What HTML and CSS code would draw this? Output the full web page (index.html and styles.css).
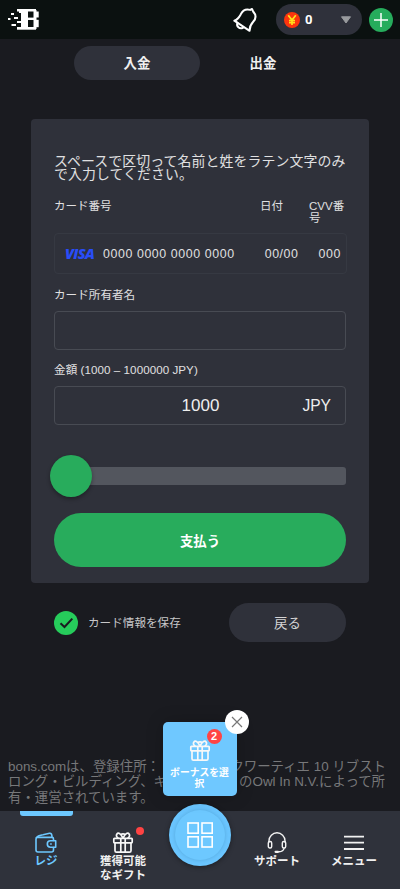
FILE: index.html
```html
<!DOCTYPE html>
<html lang="ja">
<head>
<meta charset="utf-8">
<meta name="viewport" content="width=device-width, initial-scale=1">
<title>入金</title>
<link rel="stylesheet" href="styles.css">
</head>
<body>
<div class="page">
  <header class="header">
    <svg class="logo" width="32" height="22" viewBox="0 0 32 22" fill="#fff" aria-label="Bons">
      <rect x="9" y="0" width="19" height="2.5"/>
      <rect x="13" y="0" width="7" height="20"/>
      <rect x="11" y="2" width="3" height="2"/>
      <rect x="9" y="18" width="19" height="2.7"/>
      <rect x="19" y="8.6" width="8" height="2.4"/>
      <rect x="25.5" y="1" width="3" height="19"/>
      <rect x="28" y="2.5" width="2.7" height="6"/>
      <rect x="28" y="10.8" width="2.7" height="7.4"/>
      <rect x="3" y="4" width="3" height="2"/>
      <rect x="6" y="8" width="4" height="2"/>
      <rect x="0" y="9" width="2.5" height="2"/>
      <rect x="9" y="12" width="4" height="2"/>
      <rect x="3.5" y="15" width="4.5" height="2"/>
    </svg>
    <svg class="bell" width="26" height="26" viewBox="0 0 26 26" fill="none" stroke="#fff" stroke-width="2" stroke-linecap="round" stroke-linejoin="round">
      <path d="M2.3 13.7C5.5 12.7 7 10.5 8.7 7.4C10.7 3.4 14.5 1.8 18.2 2.9L20 2L21.3 4.8C25 8.8 23.6 12.2 21 15C18.6 17.6 17.5 19.6 17.6 23.8Z"/>
      <path d="M5.4 15.7C4.2 19.5 7.3 22.7 11.3 20.6"/>
    </svg>
    <div class="balance">
      <span class="coin"><svg width="16" height="16" viewBox="0 0 16 16" fill="none" stroke="#ffe11b" stroke-width="1.7"><path d="M4.2 3.2L8 8.1L11.8 3.2M8 8V13M5 8.5H11M5 10.7H11"/></svg></span>
      <span class="balance-value">0</span>
      <svg class="caret" width="12" height="8" viewBox="0 0 12 8"><path d="M1.5 .8H10.5L6 7Z" fill="#999b9e" stroke="#999b9e" stroke-linejoin="round"/></svg>
    </div>
    <button class="add" aria-label="追加"><svg width="24" height="24" viewBox="0 0 24 24" stroke="#fff" stroke-width="1.5"><path d="M5 12H19M12 5V19"/></svg></button>
  </header>

  <nav class="tabs">
    <a class="tab tab-active">入金</a>
    <a class="tab">出金</a>
  </nav>

  <main class="card">
    <p class="notice">スペースで区切って名前と姓をラテン文字のみ<br>で入力してください。</p>
    <div class="card-labels">
      <span>カード番号</span><span>日付</span><span class="cvv-label">CVV番<br>号</span>
    </div>
    <div class="card-row">
      <span class="visa">VISA</span>
      <span class="number">0000 0000 0000 0000</span>
      <span class="date">00/00</span>
      <span class="cvv">000</span>
    </div>
    <div class="label owner-label">カード所有者名</div>
    <div class="field"></div>
    <div class="label amount-label">金額 (1000 – 1000000 JPY)</div>
    <div class="field amount"><span class="amount-value">1000</span><span class="currency">JPY</span></div>
    <div class="slider"><div class="knob"></div></div>
    <button class="pay">支払う</button>
  </main>

  <section class="actions">
    <svg width="24" height="24" viewBox="0 0 24 24"><circle cx="12" cy="12" r="12" fill="#26cc5b"/><path d="M6.5 12.2L10.5 16L18.3 7.6" fill="none" stroke="#1a1b20" stroke-width="2"/></svg>
    <span class="save">カード情報を保存</span>
    <button class="back">戻る</button>
  </section>

  <footer class="legal">
    <div class="legal-line"><span>bons.comは、登録住所：</span><span>クワーティエ 10 リブスト</span></div>
    <div class="legal-line second"><span>ロング・ビルディング、キ</span><span>のOwl In N.V.によって所</span></div>
    <div class="legal-line"><span>有・運営されています。</span></div>
  </footer>

  <nav class="bottom">
    <a class="item active">
      <svg width="22" height="22" viewBox="0 0 22 22" fill="none" stroke="#6dc8ff" stroke-width="1.6" stroke-linejoin="round" stroke-linecap="round"><path d="M18.5 8.5V7Q18.5 5.4 17 5.4H2.5Q1 5.4 1 7V18Q1 20 3 20H16.5Q18.5 20 18.5 18V15.5"/><path d="M1.5 5.7C3 3.3 5.3 3.3 8 2.8L14.5 1.3Q17 .8 17 5.2"/><path d="M20.7 8.8H15.5A3.2 3.2 0 0 0 15.5 15.2H20.7Z"/><path d="M15.7 12H16.2"/></svg>
      <span>レジ</span>
    </a>
    <a class="item">
      <svg width="22" height="22" viewBox="0 0 22 22"><use href="#gift"/></svg>
      <span>獲得可能<br>なギフト</span>
      <i class="dot"></i>
    </a>
    <a class="item">
      <div class="hub"><div class="hub-inner"><svg width="26" height="26" viewBox="0 0 26 26" fill="none" stroke="#fff" stroke-width="1.6"><rect x="1" y="1" width="10.2" height="10.2"/><rect x="15" y="1" width="10.2" height="10.2"/><rect x="1" y="14.8" width="10.2" height="10.2"/><rect x="15" y="14.8" width="10.2" height="10.2"/></svg></div></div>
      <div class="bonus">
        <svg width="22" height="22" viewBox="0 0 22 22"><use href="#gift"/></svg>
        <span class="bonus-text">ボーナスを選<br>択</span>
        <span class="badge">2</span>
        <span class="close"><svg width="12" height="12" viewBox="0 0 12 12" stroke="#777" stroke-width="1.2"><path d="M1 1L11 11M11 1L1 11"/></svg></span>
      </div>
    </a>
    <a class="item">
      <svg width="22" height="22" viewBox="0 0 22 22" fill="none" stroke="#f2f2f2" stroke-width="1.4" stroke-linecap="round"><path d="M3 10V8.8A8 8 0 0 1 19 8.8V10"/><rect x="2.3" y="9.5" width="3.4" height="6.5" rx="1.5"/><rect x="16.3" y="9.5" width="3.4" height="6.5" rx="1.5"/><path d="M18 16.5Q17.5 19.3 13 19.8"/><path d="M9.6 19.8H12" stroke-width="2.2"/></svg>
      <span>サポート</span>
    </a>
    <a class="item">
      <svg width="22" height="22" viewBox="0 0 22 22" stroke="#f2f2f2" stroke-width="1.8"><path d="M1 4.6H21M1 10.7H21M1 17H21"/></svg>
      <span>メニュー</span>
    </a>
  </nav>
</div>
<svg width="0" height="0" class="defs"><defs><g id="gift" fill="none" stroke="#f8f8f8" stroke-width="1.7" stroke-linejoin="round"><rect x="1.8" y="6.3" width="18.4" height="4.5" rx=".7"/><path d="M3 10.8V18.7Q3 20.2 4.5 20.2H17.5Q19 20.2 19 18.7V10.8M8.8 6.3V20M13.2 6.3V20"/><path d="M11 6.3C8.8 1 6 .2 4.8 2.2C3.8 4 5.1 5.6 6.5 6.2M11 6.3C13.2 1 16 .2 17.2 2.2C18.2 4 16.9 5.6 15.5 6.2M8.4 3Q11 .8 13.6 3"/></g></defs></svg>
</body>
</html>
```
FILE: styles.css
```css
* { box-sizing: border-box; }
body { margin: 0; background: #1a1b20; color: #e0e0e1; font-family: "Liberation Sans", "Noto Sans CJK JP", sans-serif; }
button { border: 0; padding: 0; font-family: inherit; }
.defs { position: absolute; }
.page { width: 400px; height: 889px; display: flex; flex-direction: column; overflow: hidden; }

.header { height: 39px; flex: none; background: #0b1110; display: flex; align-items: center; padding: 0 7px 0 8px; }
.bell { margin-left: 192px; }
.balance { width: 86px; height: 31px; margin-left: 18px; border-radius: 16px; background: #2f313b; display: flex; align-items: center; padding: 0 10px 0 8px; }
.coin { width: 16px; height: 16px; border-radius: 50%; background: #fc350e; display: flex; }
.balance-value { margin-left: 5px; font: bold 13px Roboto, sans-serif; color: #fff; }
.caret { margin-left: auto; }
.add { width: 24px; height: 24px; margin-left: 7px; border-radius: 50%; background: #26ac5c; }

.tabs { display: flex; margin: 7px 74px 0; flex: none; }
.tab { width: 126px; height: 34px; padding-top: 1px; border-radius: 17px; font-weight: bold; font-size: 13.4px; line-height: 34px; text-align: center; color: #f0f0f0; }
.tab-active { background: #2f313a; }

.card { width: 338px; height: 464px; flex: none; margin: 39px 0 0 31px; padding: 36px 23px 16px; border-radius: 4px; background: #2f313a; }
.notice { margin: 0; font-size: 13.9px; line-height: 13px; letter-spacing: .1px; white-space: nowrap; }
.card-labels { display: grid; grid-template-columns: 206px 49px 1fr; margin-top: 19px; height: 30px; font-size: 11.5px; line-height: 12px; white-space: nowrap; }
.card-row { height: 41px; margin: 3px -1px 0 0; border: 1px solid #363942; border-radius: 4px; display: flex; align-items: center; padding: 0 5px 0 10px; font-size: 12.4px; letter-spacing: .58px; white-space: nowrap; }
.visa { width: 38px; color: #294df8; font: italic 800 14.5px "Open Sans", sans-serif; letter-spacing: -.7px; }
.date { margin-left: auto; }
.cvv { margin-left: 20px; }
.label { font-size: 11.6px; line-height: 14px; white-space: nowrap; }
.owner-label { margin-top: 14px; }
.amount-label { margin-top: 13px; letter-spacing: .06px; }
.field { height: 39px; margin-top: 9px; border: 1px solid #484b53; border-radius: 4px; }
.amount { display: grid; grid-template-columns: 1fr 30px; align-items: center; padding: 0 14px 0 45px; font-size: 17px; color: #eee; }
.amount-value { text-align: center; }
.currency { font-size: 15.6px; text-align: right; }
.slider { height: 18px; margin-top: 42px; border-radius: 3px; background: #53565e; display: flex; align-items: center; }
.knob { width: 42px; height: 42px; flex: none; margin-left: -4.5px; border-radius: 50%; background: #28ac5c; box-shadow: 0 2px 4px #0005; }
.pay { display: block; width: 100%; height: 54px; margin-top: 28px; border-radius: 27px; background: #28ac5c; color: #fff; font-weight: bold; font-size: 13.4px; }

.actions { display: flex; align-items: center; margin: 20px 54px 0; height: 39px; flex: none; }
.save { margin: -2px 0 0 10px; font-size: 11.6px; color: #c8c8c9; }
.back { width: 117px; height: 39px; margin-left: auto; padding-bottom: 2px; border-radius: 20px; background: #2f313a; color: #d4d4d5; font-size: 13.4px; }

.legal { margin: auto 14px 6px 8px; font-size: 13.42px; line-height: 15.5px; color: #77787a; white-space: nowrap; }
.legal-line { display: flex; justify-content: space-between; height: 15.5px; }
.second { padding-right: 1px; }

.bottom { position: relative; height: 78px; flex: none; padding: 0 7.5px; background: #2f323b; display: grid; grid-template-columns: repeat(5, 1fr); }
.item { position: relative; display: flex; flex-direction: column; align-items: center; padding-top: 21px; font-size: 11.5px; font-weight: bold; line-height: 13.5px; color: #f0f0f0; text-align: center; white-space: nowrap; }
.item > svg { flex: none; }
.item > span { margin-top: 1px; }
.active { color: #6dc8ff; }
.active::before { content: ""; position: absolute; top: 0; left: 12px; width: 53px; height: 5px; border-radius: 0 0 3px 3px; background: #6dc8ff; }
.dot { position: absolute; left: 51px; top: 16px; width: 8px; height: 8px; border-radius: 50%; background: #ff4343; }
.hub { position: absolute; left: 7px; top: -7px; width: 62px; height: 62px; border-radius: 50%; background: #6bc6ff; display: flex; align-items: center; justify-content: center; box-shadow: 0 1px 5px #0006; }
.hub-inner { width: 50px; height: 50px; border-radius: 50%; background: #6dc8ff; box-shadow: 0 0 4px #367da866; display: flex; align-items: center; justify-content: center; }
.bonus { position: absolute; left: 1px; top: -89px; width: 74px; height: 74px; border-radius: 5px; background: #6fc8ff; display: flex; flex-direction: column; align-items: center; padding-top: 18px; box-shadow: 0 0 18px #0003; }
.bonus-text { margin-top: 5px; font-size: 9.8px; line-height: 11px; color: #fff; }
.badge { position: absolute; left: 44px; top: 7px; width: 15px; height: 15px; border-radius: 50%; background: #ff4444; color: #fff; font-size: 11px; line-height: 15px; }
.close { position: absolute; left: 62px; top: -12px; width: 24px; height: 24px; border-radius: 50%; background: #fff; display: flex; align-items: center; justify-content: center; }
```
